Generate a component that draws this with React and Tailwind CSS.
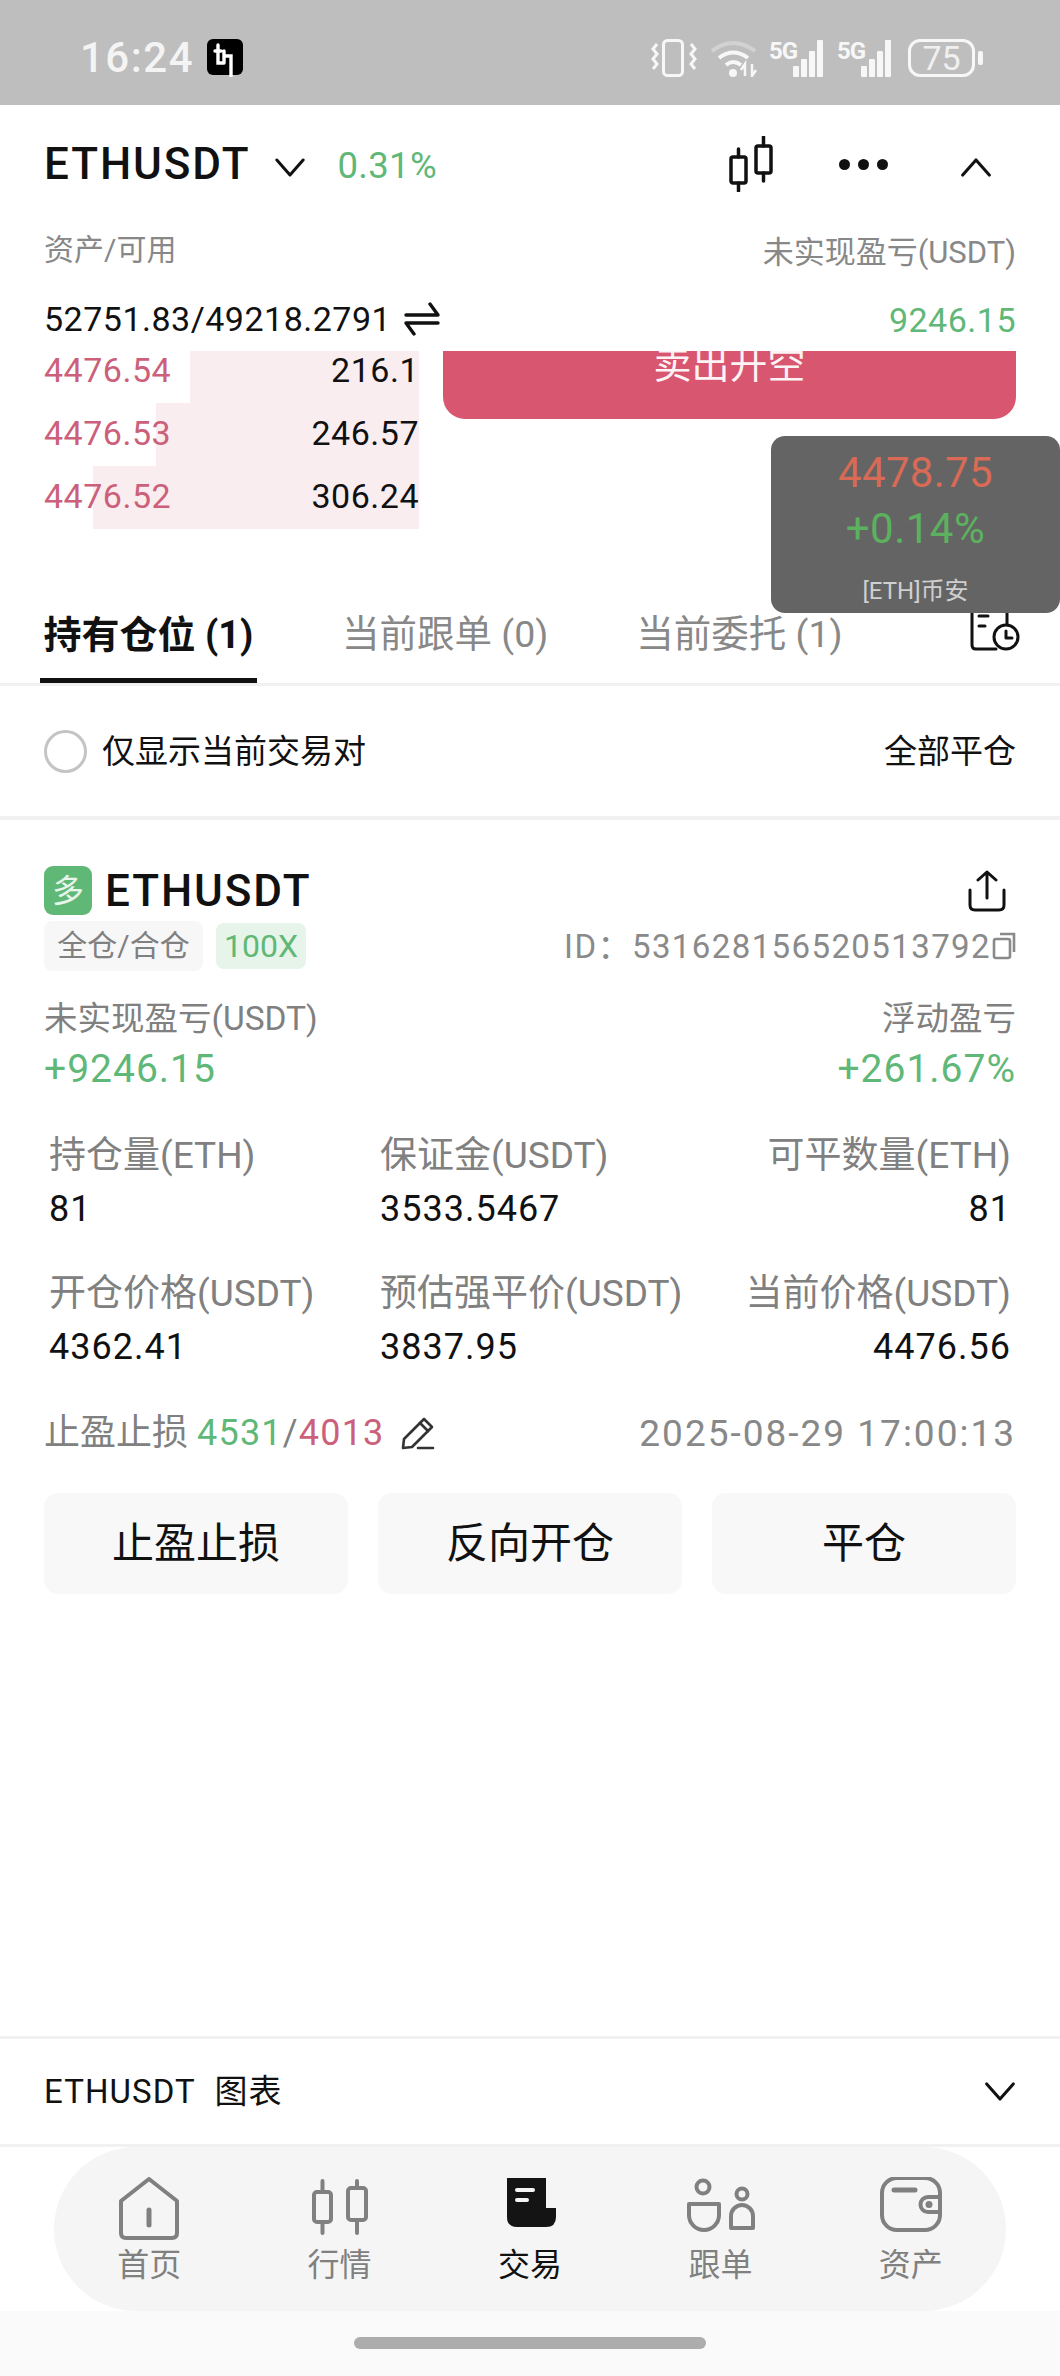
import React from "react";

const Chevron = ({ up, className }) => (
  <svg viewBox="0 0 32 20" className={className} fill="none" stroke="#111" strokeWidth="3.2" strokeLinecap="round" strokeLinejoin="round">
    <path d={up ? "M2 18 L16 2 L30 18" : "M2 2 L16 18 L30 2"} />
  </svg>
);

const Bars = () => (
  <svg width="44" height="37" viewBox="0 0 44 37" fill="#f7f7f7" className="ml-[-13px] self-end">
    <rect x="12" y="26" width="6" height="11" rx="1" />
    <rect x="20" y="19" width="6" height="18" rx="1" />
    <rect x="28" y="11" width="6" height="26" rx="1" />
    <rect x="36" y="0" width="6" height="37" rx="1" />
  </svg>
);

const StatusBar = () => (
  <div className="h-[105px] bg-[#bebebe] flex items-center justify-between pl-[80px] pr-[77px] pt-[10px]">
    <div className="flex items-center">
      <span className="text-[42px] leading-none font-medium tracking-[1.5px] text-[#f4f4f4]">16:24</span>
      <svg width="38" height="38" viewBox="0 0 38 38" className="ml-[13px]">
        <rect x="0" y="0" width="36" height="36" rx="6" fill="#000" />
        <path d="M11 6 V12 M11 12 V24 H17 M17 12 V24 M8 12 H14 M17 17 H24 V30 M24 24 V37" stroke="#fff" strokeWidth="3.4" fill="none" strokeLinecap="round" />
      </svg>
    </div>
    <div className="flex items-center h-[38px]">
      <svg width="46" height="38" viewBox="0 0 46 38" fill="none" stroke="#f7f7f7">
        <rect x="12.5" y="1.5" width="19" height="35" rx="4" strokeWidth="3" />
        <path d="M6 5 L2 10 L6 15 L2 20 L6 25 L2 30 M40 5 L44 10 L40 15 L44 20 L40 25 L44 30" strokeWidth="3" />
      </svg>
      <svg width="48" height="38" viewBox="0 0 48 38" fill="none" className="ml-[13px]">
        <path d="M2 12 Q23 -4 45 12" stroke="#d2d2d2" strokeWidth="4" />
        <path d="M9 19 Q23 8 38 19" stroke="#f7f7f7" strokeWidth="4" />
        <path d="M16 26 Q23 20 31 26" stroke="#f7f7f7" strokeWidth="4" />
        <circle cx="23" cy="34" r="4" fill="#f7f7f7" />
        <path d="M35 37 V25 L31 31 M42 25 V37 L46 31" stroke="#f7f7f7" strokeWidth="2.5" />
      </svg>
      <div className="relative flex ml-[11px] w-[56px] h-[38px] justify-end">
        <span className="absolute left-0 top-0 text-[24px] leading-none font-bold tracking-[-1px] text-[#f7f7f7]">5G</span>
        <Bars />
      </div>
      <div className="relative flex ml-[12px] w-[56px] h-[38px] justify-end">
        <span className="absolute left-0 top-0 text-[24px] leading-none font-bold tracking-[-1px] text-[#f7f7f7]">5G</span>
        <Bars />
      </div>
      <div className="ml-[15px] w-[67px] h-[38px] border-[3px] border-[#f7f7f7] rounded-[12px] flex items-center justify-center text-[34px] leading-none text-[#f0f0f0]">75</div>
      <div className="ml-[3px] w-[5px] h-[14px] rounded-[2px] bg-[#f7f7f7]" />
    </div>
  </div>
);

const Header = () => (
  <div className="bg-white">
    <div className="h-[118px] pl-[44px] pr-[68px] flex items-center justify-between">
      <div className="flex items-center">
        <span className="text-[44px] leading-none font-medium tracking-[1.9px] text-[#111]">ETHUSDT</span>
        <Chevron className="w-[30px] h-[19px] ml-[24px] mt-[6px]" />
        <span className="text-[36.5px] leading-none text-[#5fb878] ml-[33px] tracking-[0.3px] mt-[4px]">0.31%</span>
      </div>
      <div className="flex items-center">
        <svg width="46" height="56" viewBox="0 0 46 56" fill="none" stroke="#111" strokeWidth="3.5" strokeLinecap="round">
          <rect x="2" y="21" width="15" height="26" rx="2" />
          <path d="M9.5 13 V21 M9.5 47 V55" />
          <rect x="27" y="10" width="15" height="27" rx="2" />
          <path d="M34.5 1 V10 M34.5 37 V45" />
        </svg>
        <div className="flex gap-[8px] ml-[64px]">
          <span className="w-[11px] h-[11px] rounded-full bg-[#111]" />
          <span className="w-[11px] h-[11px] rounded-full bg-[#111]" />
          <span className="w-[11px] h-[11px] rounded-full bg-[#111]" />
        </div>
        <Chevron up className="w-[32px] h-[19px] ml-[72px] mt-[6px]" />
      </div>
    </div>
    <div className="h-[128px] px-[44px] flex justify-between">
      <div className="flex flex-col">
        <span className="text-[30px] leading-none text-[#888] mt-[12px]">资产/可用</span>
        <div className="flex items-center mt-[37px]">
          <span className="text-[34px] leading-none tracking-[0.5px] text-[#111]">52751.83/49218.2791</span>
          <svg width="36" height="34" viewBox="0 0 36 34" fill="none" stroke="#111" strokeWidth="3.4" strokeLinecap="round" strokeLinejoin="round" className="ml-[13px]">
            <path d="M2 13 H34 L26 2" />
            <path d="M34 21 H2 L10 32" />
          </svg>
        </div>
      </div>
      <div className="flex flex-col items-end">
        <span className="text-[31px] leading-none text-[#888] mt-[14px]">未实现盈亏(USDT)</span>
        <span className="text-[34px] leading-none tracking-[0.5px] text-[#5fb878] mt-[35px]">9246.15</span>
      </div>
    </div>
  </div>
);

const Row = ({ price, qty, bar }) => (
  <div className="relative h-[63px] w-[375px] flex items-center justify-between">
    <div className={`absolute inset-y-0 right-0 bg-[#f9edf0] ${bar}`} />
    <span className="relative text-[34px] leading-none tracking-[0.5px] text-[#cc5f7a] mt-[-3px]">{price}</span>
    <span className="relative text-[34px] leading-none tracking-[0.5px] text-[#111] mt-[-3px]">{qty}</span>
  </div>
);

const OrderBook = () => (
  <div className="h-[244px] overflow-hidden pl-[44px] pr-[44px] flex justify-between">
    <div className="mt-[-11px]">
      <Row price="4476.54" qty="216.1" bar="w-[229px]" />
      <Row price="4476.53" qty="246.57" bar="w-[263px]" />
      <Row price="4476.52" qty="306.24" bar="w-[326px]" />
    </div>
    <div className="w-[573px] h-[108px] mt-[-40px] bg-[#d8566f] rounded-b-[22px] flex items-center justify-center text-[38px] leading-none text-[#fdf3f4]">卖出开空</div>
  </div>
);

const Tabs = () => (
  <div className="h-[91px] border-b-[3px] border-[#f1f1f1] pl-[40px] pr-[40px] flex items-start justify-between">
    <div className="flex">
      <div className="relative h-[88px] w-[217px] flex justify-center pt-[21px]">
        <span className="text-[38px] leading-none font-bold whitespace-nowrap text-[#111]">持有仓位 (1)</span>
        <div className="absolute left-0 right-0 bottom-0 h-[5px] bg-[#111]" />
      </div>
      <span className="ml-[85px] pt-[21px] text-[37.5px] leading-none text-[#888]">当前跟单 (0)</span>
      <span className="ml-[88px] pt-[21px] text-[37.5px] leading-none text-[#888]">当前委托 (1)</span>
    </div>
    <svg width="50" height="46" viewBox="0 0 50 46" fill="none" stroke="#111" strokeWidth="3" strokeLinecap="round" strokeLinejoin="round" className="mt-[10px]">
      <path d="M26 44 H6 Q2 44 2 40 V6 Q2 2 6 2 H33 Q37 2 37 6 V19" />
      <path d="M9 11 H18 M9 21 H15" />
      <circle cx="36" cy="32" r="12" />
      <path d="M36 26 V33 H42" />
    </svg>
  </div>
);

const Filter = () => (
  <div className="h-[134px] border-b-[4px] border-[#f1f1f1] px-[44px] flex items-center justify-between">
    <div className="flex items-center">
      <span className="w-[43px] h-[43px] rounded-full border-[3px] border-[#c4c4c4]" />
      <span className="ml-[15px] text-[33px] leading-none text-[#111]">仅显示当前交易对</span>
    </div>
    <span className="text-[33px] leading-none text-[#111]">全部平仓</span>
  </div>
);

const Stat = ({ label, value, right }) => (
  <div className={right ? "text-right" : ""}>
    <div className={`h-[40px] flex items-center whitespace-nowrap text-[37px] leading-none text-[#808080] ${right ? "justify-end" : ""}`}>{label}</div>
    <div className="h-[40px] mt-[14px] text-[36px] leading-[40px] tracking-[1px] text-[#111]">{value}</div>
  </div>
);

const Card = () => (
  <div className="px-[44px]">
    <div className="pt-[46px] h-[95px] flex items-center justify-between">
      <div className="flex items-center">
        <span className="w-[48px] h-[49px] rounded-[9px] bg-[#60b876] flex items-center justify-center text-[32px] leading-none text-[#e8f5ea]">多</span>
        <span className="ml-[13px] text-[44px] leading-none font-medium tracking-[1.9px] text-[#111]">ETHUSDT</span>
      </div>
      <svg width="40" height="42" viewBox="0 0 40 42" fill="none" stroke="#111" strokeWidth="3" strokeLinecap="round" strokeLinejoin="round" className="mr-[9px]">
        <path d="M20 28 V2 M11 10 L20 2 L29 10" />
        <path d="M3 20 V35 Q3 40 8 40 H32 Q37 40 37 35 V20" />
      </svg>
    </div>
    <div className="mt-[6px] h-[50px] flex items-center justify-between">
      <div className="flex items-center">
        <span className="w-[159px] h-[50px] rounded-[8px] bg-[#f7f7f7] flex items-center justify-center text-[30px] leading-none text-[#808080]">全仓/合仓</span>
        <span className="ml-[13px] w-[90px] h-[46px] rounded-[8px] bg-[#e6f4e9] flex items-center justify-center text-[32px] leading-none text-[#60b876]">100X</span>
      </div>
      <div className="flex items-center text-[33px] leading-none tracking-[1.4px] text-[#8a8a8a]">
        <span>ID：</span><span>531628156520513792</span>
        <svg width="24" height="28" viewBox="0 0 24 28" fill="none" stroke="#8a8a8a" strokeWidth="2.6" className="ml-[1px]">
          <rect x="2" y="7" width="16" height="19" rx="2" />
          <path d="M8 2 H22 V20" />
        </svg>
      </div>
    </div>
    <div className="mt-[28px] h-[40px] flex items-center justify-between text-[33.5px] leading-none text-[#808080]">
      <span>未实现盈亏(USDT)</span>
      <span>浮动盈亏</span>
    </div>
    <div className="mt-[8px] h-[44px] flex items-center justify-between text-[39px] leading-none tracking-[1px] text-[#5fb878]">
      <span>+9246.15</span>
      <span>+261.67%</span>
    </div>
    <div className="mt-[44px] px-[5px] grid grid-cols-[331px_300px_1fr] gap-y-[44px]">
      <Stat label="持仓量(ETH)" value="81" />
      <Stat label="保证金(USDT)" value="3533.5467" />
      <Stat label="可平数量(ETH)" value="81" right />
      <Stat label="开仓价格(USDT)" value="4362.41" />
      <Stat label="预估强平价(USDT)" value="3837.95" />
      <Stat label="当前价格(USDT)" value="4476.56" right />
    </div>
    <div className="mt-[46px] h-[40px] flex items-center justify-between text-[36px] leading-none">
      <div className="flex items-center">
        <span className="text-[#808080]">止盈止损</span>
        <span className="ml-[9px] tracking-[1.2px] text-[#5fb878]">4531</span>
        <span className="tracking-[1.2px] text-[#808080]">/</span>
        <span className="tracking-[1.2px] text-[#cc5f7a]">4013</span>
        <svg width="36" height="34" viewBox="0 0 36 34" fill="none" stroke="#333" strokeWidth="2.6" strokeLinejoin="round" strokeLinecap="round" className="ml-[15px]">
          <path d="M3 32 L4 23 L24 3 L32 11 L12 31 Z" />
          <path d="M20 7 L28 15 M18 32 H33" />
        </svg>
      </div>
      <span className="text-[37px] tracking-[2px] text-[#888]">2025-08-29 17:00:13</span>
    </div>
    <div className="mt-[40px] grid grid-cols-3 gap-[30px]">
      {["止盈止损", "反向开仓", "平仓"].map((t) => (
        <div key={t} className="h-[101px] rounded-[14px] bg-[#f8f8f8] flex items-center justify-center text-[42px] leading-none text-[#111]">{t}</div>
      ))}
    </div>
  </div>
);

const NavIcon = ({ name }) => {
  const g = { fill: "none", stroke: "#808080", strokeWidth: 4, strokeLinecap: "round", strokeLinejoin: "round" };
  if (name === "home")
    return (
      <svg width="62" height="64" viewBox="0 0 62 64" {...g}>
        <path d="M3 24 L31 2 L59 24 V56 Q59 61 54 61 H8 Q3 61 3 56 Z" />
        <path d="M31 33 V48" strokeWidth="5" />
      </svg>
    );
  if (name === "candle")
    return (
      <svg width="60" height="64" viewBox="0 0 60 64" {...g}>
        <rect x="4" y="15" width="17" height="30" rx="3" />
        <path d="M12.5 4 V15 M12.5 45 V56" />
        <rect x="38" y="11" width="18" height="32" rx="3" />
        <path d="M47 4 V11 M47 43 V56" />
      </svg>
    );
  if (name === "trade")
    return (
      <svg width="62" height="64" viewBox="0 0 62 64">
        <path d="M8 1 H47 V31 H57 V40 Q57 50 47 50 H18 Q8 50 8 40 Z" fill="#141414" />
        <rect x="16" y="11" width="20" height="4" rx="2" fill="#f5f5f5" />
        <rect x="16" y="21" width="14" height="4" rx="2" fill="#f5f5f5" />
      </svg>
    );
  if (name === "follow")
    return (
      <svg width="70" height="64" viewBox="0 0 70 64" {...g}>
        <circle cx="18" cy="10" r="6.5" />
        <path d="M4 27 H34 V38 A15 15 0 0 1 4 38 Z" />
        <circle cx="57" cy="17" r="5.5" />
        <path d="M46 51 V39 A11 11 0 0 1 68 39 V51 Z" />
      </svg>
    );
  return (
    <svg width="64" height="64" viewBox="0 0 64 64" {...g}>
      <rect x="3" y="1" width="58" height="52" rx="15" />
      <path d="M15 13 H36" strokeWidth="5" />
      <path d="M61 20 H49 A7.5 7.5 0 0 0 49 35 H61" />
      <circle cx="50" cy="27.5" r="3.5" fill="#808080" stroke="none" />
    </svg>
  );
};

const Item = ({ icon, label, active }) => (
  <div className="flex flex-col items-center pt-[30px]">
    <div className="h-[64px] flex items-center justify-center"><NavIcon name={icon} /></div>
    <span className={`mt-[8px] text-[32px] leading-none ${active ? "text-[#111]" : "text-[#808080]"}`}>{label}</span>
  </div>
);

export default function App() {
  return (
    <div className="relative w-[1060px] h-[2376px] overflow-hidden bg-white font-['Roboto','Noto_Sans_CJK_SC',sans-serif]">
      <StatusBar />
      <Header />
      <OrderBook />
      <Tabs />
      <Filter />
      <Card />
      <div className="mt-[442px] h-[3px] bg-[#f1f1f1]" />
      <div className="h-[105px] px-[44px] flex items-center justify-between">
        <span className="text-[33px] leading-none tracking-[1.1px] text-[#111]">ETHUSDT&nbsp;&nbsp;图表</span>
        <Chevron className="w-[32px] h-[19px]" />
      </div>
      <div className="h-[3px] bg-[#f1f1f1]" />
      <div className="h-[164px] px-[54px]">
        <div className="h-[164px] rounded-[82px] bg-[#f5f5f5] grid grid-cols-5">
          <Item icon="home" label="首页" />
          <Item icon="candle" label="行情" />
          <Item icon="trade" label="交易" active />
          <Item icon="follow" label="跟单" />
          <Item icon="wallet" label="资产" />
        </div>
      </div>
      <div className="h-[65px] bg-[#fafafa] flex justify-center pt-[26px]">
        <div className="w-[352px] h-[12px] rounded-full bg-[#adadad]" />
      </div>
      <div className="absolute left-[771px] top-[436px] w-[289px] h-[177px] rounded-[14px] bg-[#646464] flex flex-col items-center">
        <span className="mt-[17px] text-[42px] leading-[40px] tracking-[0.3px] text-[#d96a55]">4478.75</span>
        <span className="mt-[16px] text-[42px] leading-[40px] tracking-[0.5px] text-[#5cb15f]">+0.14%</span>
        <span className="mt-[28px] text-[24px] leading-[28px] text-[#cfcfcf]">[ETH]币安</span>
      </div>
    </div>
  );
}
